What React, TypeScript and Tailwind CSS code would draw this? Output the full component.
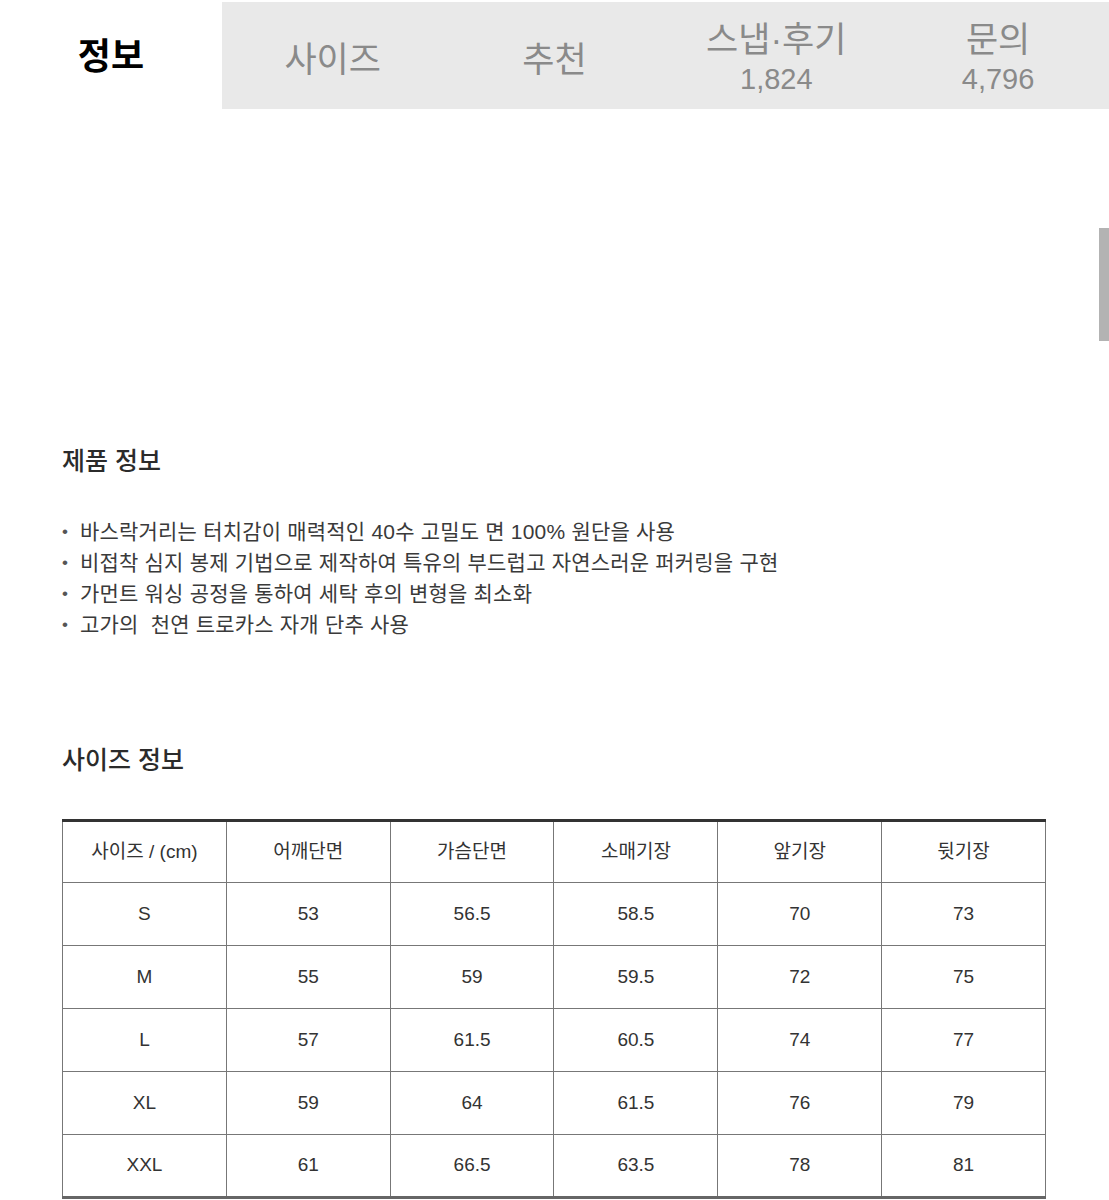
const tabs = [
  { label: '정보', active: true },
  { label: '사이즈' },
  { label: '추천' },
  { label: '스냅·후기', count: '1,824' },
  { label: '문의', count: '4,796' },
];

const features = [
  '바스락거리는 터치감이 매력적인 40수 고밀도 면 100% 원단을 사용',
  '비접착 심지 봉제 기법으로 제작하여 특유의 부드럽고 자연스러운 퍼커링을 구현',
  '가먼트 워싱 공정을 통하여 세탁 후의 변형을 최소화',
  '고가의  천연 트로카스 자개 단추 사용',
];

const headers = ['사이즈 / (cm)', '어깨단면', '가슴단면', '소매기장', '앞기장', '뒷기장'];

const rows = [
  ['S', '53', '56.5', '58.5', '70', '73'],
  ['M', '55', '59', '59.5', '72', '75'],
  ['L', '57', '61.5', '60.5', '74', '77'],
  ['XL', '59', '64', '61.5', '76', '79'],
  ['XXL', '61', '66.5', '63.5', '78', '81'],
];

const TabBar = () => (
  <div className="grid grid-cols-5 h-[109px]">
    {tabs.map((t) =>
      t.active ? (
        <div key={t.label} className="flex items-center justify-center bg-white pt-1">
          <span className="text-[36px] font-bold text-black leading-none">{t.label}</span>
        </div>
      ) : (
        <div
          key={t.label}
          className="flex flex-col items-center justify-center bg-[#e9e9e9] mt-[2px] text-[#8a8a8a] pt-1"
        >
          <span className={`text-[35px] leading-[42px] ${t.count ? '' : 'pt-1'}`}>{t.label}</span>
          {t.count && <span className="text-[29px] leading-[36px]">{t.count}</span>}
        </div>
      ),
    )}
  </div>
);

const App = () => {
  return (
    <div
      className="relative w-[1109px] min-h-[1200px] bg-white overflow-hidden"
      style={{ fontFamily: '"Liberation Sans", "Noto Sans CJK KR", sans-serif' }}
    >
      <TabBar />

      {/* scroll indicator */}
      <div className="absolute right-0 top-[228px] w-[10px] h-[113px] bg-[#b3b3b3]" />

      <div className="pl-[62px] pr-[63px]">
        <h2 className="mt-[337px] text-[25px] font-medium text-[#2b2b2b] leading-[30px]">제품 정보</h2>

        <ul className="mt-[40px] text-[21px] text-[#3a3a3a] leading-[31px] tracking-[0.2px]">
          {features.map((f) => (
            <li key={f} className="flex whitespace-pre">
              <span className="w-[18px] text-[17px] text-[#555]">•</span>
              <span>{f}</span>
            </li>
          ))}
        </ul>

        <h2 className="mt-[105px] text-[25px] font-medium text-[#2b2b2b] leading-[30px]">사이즈 정보</h2>

        <table className="mt-[44px] w-[984px] border-collapse table-fixed text-[19px] text-[#333]">
          <thead>
            <tr className="h-[62px]">
              {headers.map((h) => (
                <th key={h} className="border border-[#777] border-t-[3px] border-t-[#333] font-normal">
                  {h}
                </th>
              ))}
            </tr>
          </thead>
          <tbody>
            {rows.map((r, i) => (
              <tr key={r[0]} className="h-[63px]">
                {r.map((c, j) => (
                  <td
                    key={j}
                    className={`border border-[#777] text-center ${i === rows.length - 1 ? 'border-b-[3px] border-b-[#666]' : ''}`}
                  >
                    {c}
                  </td>
                ))}
              </tr>
            ))}
          </tbody>
        </table>
      </div>
    </div>
  );
};

export default App;
